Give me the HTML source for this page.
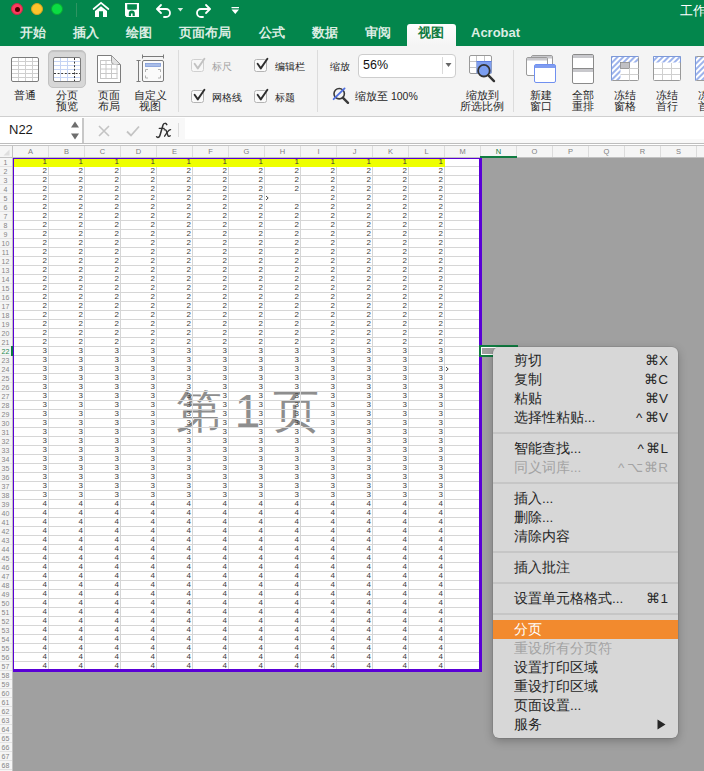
<!DOCTYPE html><html><head><meta charset="utf-8"><style>
*{margin:0;padding:0;box-sizing:border-box}
html,body{width:704px;height:771px;overflow:hidden;background:#fff;font-family:"Liberation Sans", sans-serif}
.a{position:absolute}
#top{left:0;top:0;width:704px;height:46px;background:#03864c}
.tab{position:absolute;top:26px;color:#dcede3;font-size:13px;font-weight:bold;line-height:14px;white-space:nowrap}
#rib{left:0;top:46px;width:704px;height:71px;background:#f4f4f4;border-bottom:1px solid #cfcfcf}
.rt{position:absolute;font-size:10.5px;line-height:10.5px;color:#262626;text-align:center;white-space:nowrap}
.sep{position:absolute;width:1px;background:#dcdcdc}
.cb{position:absolute;width:13px;height:13px;border:1px solid #b4b4b4;border-radius:2.5px;background:#fafafa}
.cl{position:absolute;font-size:10px;line-height:11px;color:#262626;white-space:nowrap}
.ch{position:absolute;top:146px;height:11px;font-size:7.5px;line-height:11px;color:#808080;text-align:center;width:35px}
.rh{position:absolute;left:0;width:11px;height:8px;font-size:7px;line-height:9px;color:#858585;text-align:center}
.r{position:absolute;font-size:8px;line-height:8px;color:#3a3a3a;text-align:right;width:34px;white-space:nowrap}
.mi{position:absolute;left:21px;font-size:13.5px;line-height:19px;height:19px;color:#262626;white-space:nowrap}
.ms{position:absolute;right:10px;font-size:13.5px;line-height:19px;height:19px;color:#262626;white-space:nowrap;text-align:right}
.mline{position:absolute;left:0;width:185px;height:2px;background:#c6c6c6}
</style></head><body>
<div id="top" class="a">
<div class="a" style="left:11px;top:3px;width:12px;height:12px;border-radius:50%;background:#fd3c5e;border:0.5px solid #c92a48"></div>
<div class="a" style="left:31px;top:3px;width:12px;height:12px;border-radius:50%;background:#fdc42c;border:0.5px solid #d9a21e"></div>
<div class="a" style="left:51px;top:3px;width:12px;height:12px;border-radius:50%;background:#0bdc43;border:0.5px solid #08a833"></div>
<div class="a" style="left:14.5px;top:6.5px;width:5px;height:5px;border-radius:50%;background:#4d0000"></div>
<div class="a" style="left:76px;top:3px;width:1px;height:14px;background:#2f9462"></div>
<svg class="a" style="left:0;top:0" width="260" height="22" viewBox="0 0 260 22">
<g fill="#fff">
<path d="M101 6.2 L107 11 V17 H103 V11.2 H99 V17 H95 V11 Z"/>
<path d="M93.6 9 L101 2.9 L108.4 9" fill="none" stroke="#fff" stroke-width="1.7" stroke-linecap="round" stroke-linejoin="miter"/>
<path d="M125 3 h14 v14 h-12.5 l-1.5 -1.5 z M127.2 4.2 h9.7 v4.3 a1.3 1.3 0 0 1 -1.3 1.3 h-7.1 a1.3 1.3 0 0 1 -1.3 -1.3 z M128.8 16 v-2.6 a3 3 0 0 1 6 0 v2.6 h-2.2 v-2.4 h-1.6 v2.4 z" fill-rule="evenodd"/>
<path d="M177.6 8 h5.6 l-2.8 3.6 z" fill="#d8eadf"/>
<path d="M231.5 7 h7.5 v1.2 h-7.5 z M231.5 9.5 h7.5 l-3.75 4.5 z"/>
</g>
<g fill="none" stroke="#fff" stroke-width="1.8" stroke-linecap="round" stroke-linejoin="round">
<path d="M161 5 L157 9 L161 13"/><path d="M157.5 9 H166 a4 4 0 0 1 0 8 h-2"/>
<path d="M206 5 L210 9 L206 13"/><path d="M209.5 9 H201 a4 4 0 0 0 0 8 h2"/>
</g></svg>
<div class="a" style="left:680px;top:4px;font-size:13px;line-height:14px;color:#fff;white-space:nowrap">工作簿1</div>
<div class="tab" style="left:20px">开始</div>
<div class="tab" style="left:73px">插入</div>
<div class="tab" style="left:126px">绘图</div>
<div class="tab" style="left:179px">页面布局</div>
<div class="tab" style="left:259px">公式</div>
<div class="tab" style="left:312px">数据</div>
<div class="tab" style="left:365px">审阅</div>
<div class="tab" style="left:471px">Acrobat</div>
<div class="a" style="left:407px;top:24px;width:49px;height:22px;background:linear-gradient(#fefefe,#f4f4f4);border-radius:3px 3px 0 0"></div>
<div class="tab" style="left:418px;color:#107c41">视图</div>
</div>
<div id="rib" class="a"></div>
<div id="ribc" class="a" style="left:0;top:0;width:704px;height:120px">
<div class="a" style="left:48px;top:50px;width:38px;height:38px;border-radius:5px;background:#d7d7d7;border:1px solid #c2c2c2;box-shadow:inset 0 1px 1px rgba(0,0,0,0.10)"></div>
<svg class="a" style="left:0;top:0" width="704" height="117" viewBox="0 0 704 117">
<defs><pattern id="hat" width="4" height="4" patternUnits="userSpaceOnUse" patternTransform="rotate(45)"><rect width="4" height="4" fill="#fff"/><rect width="2" height="4" fill="#9db3ec"/></pattern></defs>
<!-- 普通 -->
<rect x="11.5" y="57.5" width="27" height="24" rx="1.5" fill="#fff" stroke="#7c7c7c"/>
<path d="M18.5 58v23M25.5 58v23M32.5 58v23M12 61.5h26M12 65.5h26M12 69.5h26M12 73.5h26M12 77.5h26" stroke="#cfcfcf" stroke-width="1" fill="none"/>
<!-- 分页预览 -->
<rect x="53.5" y="57.5" width="27" height="24" rx="1.5" fill="#fff" stroke="#7c7c7c"/>
<path d="M60.5 58v23M67.5 58v23M54 61.5h26M54 65.5h26M54 69.5h26M54 77.5h26" stroke="#c6d4f4" stroke-width="1" fill="none"/>
<path d="M74.5 58v23M54 73.5h26" stroke="#3a3a3a" stroke-width="1" stroke-dasharray="2 1.6" fill="none"/>
<!-- 页面布局 -->
<path d="M97.5 55.5h14l9 9v18h-23z" fill="#fff" stroke="#7c7c7c"/>
<path d="M111.5 55.5v6a3 3 0 0 0 3 3h6z" fill="#e2e2e2" stroke="#9a9a9a"/>
<path d="M100.5 60.5h10M100.5 64.5h17M100.5 69h17M100.5 73.5h17M100.5 78.5h17M100.5 60v19M106 60v19M111.5 64v15M117 65v14" stroke="#c8c8c8" fill="none"/>
<!-- 自定义视图 -->
<path d="M142.5 54.5v4M163.5 54.5v4M142.5 56.5h21M136.5 60.5h4M136.5 81.5h4M138.5 60.5v21" stroke="#7a7a7a" fill="none"/>
<rect x="142.5" y="60.5" width="21" height="21" rx="1.5" fill="#fafafa" stroke="#7c7c7c"/>
<rect x="145.5" y="63.5" width="15" height="3" fill="#a9bde8" stroke="#7f9bd8" stroke-width="0.8"/>
<path d="M145.5 72v-2.5h2.5M158 69.5h2.5v2.5M145.5 75.5v2.5h2.5M158 78h2.5v-2.5" stroke="#b0b0b0" fill="none"/>
<!-- zoom 100 icon -->
<circle cx="339.2" cy="93.7" r="5.2" fill="none" stroke="#3a3a3a" stroke-width="1.6"/>
<path d="M343 97.8l5 5" stroke="#3a3a3a" stroke-width="2.4" stroke-linecap="round"/>
<path d="M333.6 99.2l11-10.8" stroke="#4f6fe0" stroke-width="1.8" stroke-linecap="round"/>
<!-- zoom to selection -->
<rect x="469.5" y="55.5" width="22" height="18" rx="1.5" fill="#fff" stroke="#9a9a9a"/>
<path d="M476.5 56v17M484.5 56v6M470 61.5h7M470 67.5h7" stroke="#c4c4c4" fill="none"/>
<rect x="476.5" y="61" width="15" height="12.5" fill="#7f9ff0"/>
<path d="M476.5 61.5h15" stroke="#5f7fe0"/>
<circle cx="483.9" cy="70.7" r="5.8" fill="#7b9ef0" stroke="#333" stroke-width="1.8"/>
<path d="M488.4 75.3l5.6 5.8" stroke="#333" stroke-width="2.4" stroke-linecap="round"/>
<!-- new window -->
<rect x="531.5" y="55.5" width="21" height="17" rx="1.5" fill="#fff" stroke="#9a9a9a"/>
<rect x="532" y="56" width="20" height="2.5" fill="#c8c8cc"/>
<rect x="526.5" y="57.5" width="21" height="18" rx="1.5" fill="#fff" stroke="#9a9a9a"/>
<rect x="527" y="58" width="20" height="2.5" fill="#c8c8cc"/>
<rect x="534.5" y="64.5" width="21" height="18" rx="1.5" fill="#fff" stroke="#7090f0"/>
<rect x="535" y="65" width="20" height="3" fill="#7f9cf0"/>
<!-- arrange all -->
<rect x="572.5" y="54.5" width="21" height="29" rx="1.5" fill="#fff" stroke="#8a8a8a"/>
<rect x="573" y="55" width="20" height="3" fill="#c8c8cc"/>
<path d="M572.5 68.5h21" stroke="#8a8a8a"/>
<rect x="573" y="69" width="20" height="3" fill="#c8c8cc"/>
<!-- freeze panes -->
<rect x="611.5" y="56.5" width="27" height="24" rx="1" fill="#fff" stroke="#9a9a9a"/>
<rect x="612" y="57" width="26" height="5.5" fill="url(#hat)"/>
<rect x="612" y="57" width="8.5" height="23" fill="url(#hat)"/>
<path d="M611.5 80.5v-24h27" stroke="#7d99d8" fill="none"/>
<rect x="620.5" y="62.5" width="9" height="6" fill="#c0c0c4" stroke="#8a8a8a" stroke-width="0.8"/>
<path d="M620.5 74.5h18M629.5 68.5v12M629.5 68.5h9" stroke="#cfcfcf" fill="none"/>
<!-- freeze top row -->
<rect x="653.5" y="56.5" width="27" height="24" rx="1" fill="#fff" stroke="#9a9a9a"/>
<rect x="654" y="57" width="26" height="5.5" fill="url(#hat)"/>
<path d="M653.5 62.5v-6h27v6" stroke="#7d99d8" fill="none"/>
<path d="M654 68.5h26M654 74.5h26M662.5 63v17M671.5 63v17" stroke="#cfcfcf" fill="none"/>
<!-- freeze first col partial -->
<rect x="695.5" y="56.5" width="27" height="24" rx="1" fill="#fff" stroke="#9a9a9a"/>
<rect x="696" y="57" width="8.5" height="23" fill="url(#hat)"/>
<path d="M695.5 80.5v-24" stroke="#7d99d8" fill="none"/>
</svg>
<div class="rt" style="left:5.0px;top:90px;width:40px">普通</div>
<div class="rt" style="left:46.5px;top:90px;width:40px">分页<br>预览</div>
<div class="rt" style="left:88.5px;top:90px;width:40px">页面<br>布局</div>
<div class="rt" style="left:130.0px;top:90px;width:40px">自定义<br>视图</div>
<div class="rt" style="left:457.0px;top:90px;width:50px">缩放到<br>所选比例</div>
<div class="rt" style="left:520.5px;top:90px;width:40px">新建<br>窗口</div>
<div class="rt" style="left:563.0px;top:90px;width:40px">全部<br>重排</div>
<div class="rt" style="left:605.0px;top:90px;width:40px">冻结<br>窗格</div>
<div class="rt" style="left:647.0px;top:90px;width:40px">冻结<br>首行</div>
<div class="rt" style="left:689.0px;top:90px;width:40px">冻结<br>首列</div>
<div class="sep" style="left:178px;top:50px;height:62px"></div>
<div class="sep" style="left:317px;top:50px;height:62px"></div>
<div class="sep" style="left:513px;top:50px;height:62px"></div>
<div class="cb" style="left:191px;top:59px;opacity:.55;"></div>
<svg class="a" style="left:191px;top:57px" width="16" height="16"><path d="M3.6 6.8l3.2 4.6L13.4 1.8" fill="none" stroke="#c2c2c2" stroke-width="1.9" stroke-linecap="round" stroke-linejoin="round"/></svg>
<div class="cl" style="left:212px;top:60.5px;color:#a0a0a0">标尺</div>
<div class="cb" style="left:254px;top:59px;"></div>
<svg class="a" style="left:254px;top:57px" width="16" height="16"><path d="M3.6 6.8l3.2 4.6L13.4 1.8" fill="none" stroke="#2e2e2e" stroke-width="1.9" stroke-linecap="round" stroke-linejoin="round"/></svg>
<div class="cl" style="left:275px;top:60.5px;color:#262626">编辑栏</div>
<div class="cb" style="left:191px;top:90px;"></div>
<svg class="a" style="left:191px;top:88px" width="16" height="16"><path d="M3.6 6.8l3.2 4.6L13.4 1.8" fill="none" stroke="#2e2e2e" stroke-width="1.9" stroke-linecap="round" stroke-linejoin="round"/></svg>
<div class="cl" style="left:212px;top:91.5px;color:#262626">网格线</div>
<div class="cb" style="left:254px;top:90px;"></div>
<svg class="a" style="left:254px;top:88px" width="16" height="16"><path d="M3.6 6.8l3.2 4.6L13.4 1.8" fill="none" stroke="#2e2e2e" stroke-width="1.9" stroke-linecap="round" stroke-linejoin="round"/></svg>
<div class="cl" style="left:275px;top:91.5px;color:#262626">标题</div>
<div class="cl" style="left:330px;top:61px">缩放</div>
<div class="a" style="left:358px;top:54px;width:98px;height:24px;background:#fff;border:1px solid #cdcdcd;border-radius:4px"></div>
<div class="a" style="left:442px;top:57px;width:1px;height:17px;background:#dadada"></div>
<svg class="a" style="left:445px;top:62px" width="8" height="6"><path d="M0.5 1h6l-3 4z" fill="#666"/></svg>
<div class="a" style="left:363px;top:58px;font-size:12.5px;line-height:14px;color:#111">56%</div>
<div class="cl" style="left:355px;top:91px;font-size:10.5px">缩放至 100%</div>
</div>
<div class="a" style="left:0;top:118px;width:704px;height:25px;background:#f8f8f8"></div>
<div class="a" style="left:0;top:118px;width:82px;height:25px;background:#fff"></div>
<div class="a" style="left:185px;top:118px;width:519px;height:21px;background:#fff"></div>
<div class="a" style="left:82px;top:118px;width:2px;height:25px;background:#c8c8c8"></div>
<div class="a" style="left:9px;top:123px;font-size:13px;line-height:14px;color:#1a1a1a">N22</div>
<svg class="a" style="left:70px;top:120px" width="10" height="21"><path d="M1 7.5h8l-4-6z M1 13.5h8l-4 6z" fill="#6e6e6e"/></svg>
<svg class="a" style="left:90px;top:118px" width="100" height="25"><path d="M9 8l10 10M19 8l-10 10" stroke="#c4c4c4" stroke-width="1.6"/><path d="M37 13.5l4 4l8-9" fill="none" stroke="#c4c4c4" stroke-width="1.8"/><path d="M88.5 5v14" stroke="#dcdcdc"/></svg>
<svg class="a" style="left:150px;top:118px" width="30" height="24" viewBox="150 118 30 24"><g fill="none" stroke="#333" stroke-linecap="round"><path d="M166.8 124.6 C166 122.9 163.8 122.9 163 125 L160 135.3 C159.4 137.6 157.6 137.8 156.6 136.8" stroke-width="1.5"/><path d="M159.2 128.4 h5" stroke-width="1.1"/><path d="M164.2 129.8 C165.6 129.2 166.2 130.2 166.6 131.6 L167.8 135.2 C168.3 136.8 169.4 136.6 170.2 135.8" stroke-width="1.4"/><path d="M170.6 129.6 C169.6 129.6 168.2 130.8 166.8 132.8 L164.6 136.2" stroke-width="1.3"/></g></svg>
<div class="a" style="left:0;top:143px;width:704px;height:1px;background:#bdbdbd"></div>
<div class="a" style="left:0;top:145px;width:704px;height:1px;background:#c4c4c4"></div>
<div class="a" style="left:0;top:146px;width:704px;height:11px;background:#f5f5f5"></div>
<div class="a" style="left:0;top:157px;width:704px;height:1px;background:#c2c2c2"></div>
<div class="a" style="left:0;top:158px;width:12px;height:613px;background:#f5f5f5"></div>
<div class="a" style="left:12px;top:146px;width:1px;height:625px;background:#c2c2c2"></div>
<svg class="a" style="left:0;top:146px" width="12" height="11"><path d="M9.5 3.5v6h-6z" fill="#dedede"/></svg>
<div class="ch" style="left:13px;color:#808080">A</div>
<div class="a" style="left:48px;top:146px;width:1px;height:11px;background:#dcdcdc"></div>
<div class="ch" style="left:49px;color:#808080">B</div>
<div class="a" style="left:84px;top:146px;width:1px;height:11px;background:#dcdcdc"></div>
<div class="ch" style="left:85px;color:#808080">C</div>
<div class="a" style="left:120px;top:146px;width:1px;height:11px;background:#dcdcdc"></div>
<div class="ch" style="left:121px;color:#808080">D</div>
<div class="a" style="left:156px;top:146px;width:1px;height:11px;background:#dcdcdc"></div>
<div class="ch" style="left:157px;color:#808080">E</div>
<div class="a" style="left:192px;top:146px;width:1px;height:11px;background:#dcdcdc"></div>
<div class="ch" style="left:193px;color:#808080">F</div>
<div class="a" style="left:228px;top:146px;width:1px;height:11px;background:#dcdcdc"></div>
<div class="ch" style="left:229px;color:#808080">G</div>
<div class="a" style="left:264px;top:146px;width:1px;height:11px;background:#dcdcdc"></div>
<div class="ch" style="left:265px;color:#808080">H</div>
<div class="a" style="left:300px;top:146px;width:1px;height:11px;background:#dcdcdc"></div>
<div class="ch" style="left:301px;color:#808080">I</div>
<div class="a" style="left:336px;top:146px;width:1px;height:11px;background:#dcdcdc"></div>
<div class="ch" style="left:337px;color:#808080">J</div>
<div class="a" style="left:372px;top:146px;width:1px;height:11px;background:#dcdcdc"></div>
<div class="ch" style="left:373px;color:#808080">K</div>
<div class="a" style="left:408px;top:146px;width:1px;height:11px;background:#dcdcdc"></div>
<div class="ch" style="left:409px;color:#808080">L</div>
<div class="a" style="left:444px;top:146px;width:1px;height:11px;background:#dcdcdc"></div>
<div class="ch" style="left:445px;color:#808080">M</div>
<div class="a" style="left:480px;top:146px;width:1px;height:11px;background:#dcdcdc"></div>
<div class="ch" style="left:481px;color:#107c41">N</div>
<div class="a" style="left:516px;top:146px;width:1px;height:11px;background:#dcdcdc"></div>
<div class="ch" style="left:517px;color:#808080">O</div>
<div class="a" style="left:552px;top:146px;width:1px;height:11px;background:#dcdcdc"></div>
<div class="ch" style="left:553px;color:#808080">P</div>
<div class="a" style="left:588px;top:146px;width:1px;height:11px;background:#dcdcdc"></div>
<div class="ch" style="left:589px;color:#808080">Q</div>
<div class="a" style="left:624px;top:146px;width:1px;height:11px;background:#dcdcdc"></div>
<div class="ch" style="left:625px;color:#808080">R</div>
<div class="a" style="left:660px;top:146px;width:1px;height:11px;background:#dcdcdc"></div>
<div class="ch" style="left:661px;color:#808080">S</div>
<div class="a" style="left:696px;top:146px;width:1px;height:11px;background:#dcdcdc"></div>
<div class="a" style="left:480px;top:156px;width:37px;height:2px;background:#107c41"></div>
<div class="rh" style="top:158px;color:#858585">1</div>
<div class="a" style="left:0;top:166px;width:12px;height:1px;background:#e2e2e2"></div>
<div class="rh" style="top:167px;color:#858585">2</div>
<div class="a" style="left:0;top:175px;width:12px;height:1px;background:#e2e2e2"></div>
<div class="rh" style="top:176px;color:#858585">3</div>
<div class="a" style="left:0;top:184px;width:12px;height:1px;background:#e2e2e2"></div>
<div class="rh" style="top:185px;color:#858585">4</div>
<div class="a" style="left:0;top:193px;width:12px;height:1px;background:#e2e2e2"></div>
<div class="rh" style="top:194px;color:#858585">5</div>
<div class="a" style="left:0;top:202px;width:12px;height:1px;background:#e2e2e2"></div>
<div class="rh" style="top:203px;color:#858585">6</div>
<div class="a" style="left:0;top:211px;width:12px;height:1px;background:#e2e2e2"></div>
<div class="rh" style="top:212px;color:#858585">7</div>
<div class="a" style="left:0;top:220px;width:12px;height:1px;background:#e2e2e2"></div>
<div class="rh" style="top:221px;color:#858585">8</div>
<div class="a" style="left:0;top:229px;width:12px;height:1px;background:#e2e2e2"></div>
<div class="rh" style="top:230px;color:#858585">9</div>
<div class="a" style="left:0;top:238px;width:12px;height:1px;background:#e2e2e2"></div>
<div class="rh" style="top:239px;color:#858585">10</div>
<div class="a" style="left:0;top:247px;width:12px;height:1px;background:#e2e2e2"></div>
<div class="rh" style="top:248px;color:#858585">11</div>
<div class="a" style="left:0;top:256px;width:12px;height:1px;background:#e2e2e2"></div>
<div class="rh" style="top:257px;color:#858585">12</div>
<div class="a" style="left:0;top:265px;width:12px;height:1px;background:#e2e2e2"></div>
<div class="rh" style="top:266px;color:#858585">13</div>
<div class="a" style="left:0;top:274px;width:12px;height:1px;background:#e2e2e2"></div>
<div class="rh" style="top:275px;color:#858585">14</div>
<div class="a" style="left:0;top:283px;width:12px;height:1px;background:#e2e2e2"></div>
<div class="rh" style="top:284px;color:#858585">15</div>
<div class="a" style="left:0;top:292px;width:12px;height:1px;background:#e2e2e2"></div>
<div class="rh" style="top:293px;color:#858585">16</div>
<div class="a" style="left:0;top:301px;width:12px;height:1px;background:#e2e2e2"></div>
<div class="rh" style="top:302px;color:#858585">17</div>
<div class="a" style="left:0;top:310px;width:12px;height:1px;background:#e2e2e2"></div>
<div class="rh" style="top:311px;color:#858585">18</div>
<div class="a" style="left:0;top:319px;width:12px;height:1px;background:#e2e2e2"></div>
<div class="rh" style="top:320px;color:#858585">19</div>
<div class="a" style="left:0;top:328px;width:12px;height:1px;background:#e2e2e2"></div>
<div class="rh" style="top:329px;color:#858585">20</div>
<div class="a" style="left:0;top:337px;width:12px;height:1px;background:#e2e2e2"></div>
<div class="rh" style="top:338px;color:#858585">21</div>
<div class="a" style="left:0;top:346px;width:12px;height:1px;background:#e2e2e2"></div>
<div class="rh" style="top:347px;color:#1f8a50">22</div>
<div class="a" style="left:0;top:355px;width:12px;height:1px;background:#e2e2e2"></div>
<div class="rh" style="top:356px;color:#858585">23</div>
<div class="a" style="left:0;top:364px;width:12px;height:1px;background:#e2e2e2"></div>
<div class="rh" style="top:365px;color:#858585">24</div>
<div class="a" style="left:0;top:373px;width:12px;height:1px;background:#e2e2e2"></div>
<div class="rh" style="top:374px;color:#858585">25</div>
<div class="a" style="left:0;top:382px;width:12px;height:1px;background:#e2e2e2"></div>
<div class="rh" style="top:383px;color:#858585">26</div>
<div class="a" style="left:0;top:391px;width:12px;height:1px;background:#e2e2e2"></div>
<div class="rh" style="top:392px;color:#858585">27</div>
<div class="a" style="left:0;top:400px;width:12px;height:1px;background:#e2e2e2"></div>
<div class="rh" style="top:401px;color:#858585">28</div>
<div class="a" style="left:0;top:409px;width:12px;height:1px;background:#e2e2e2"></div>
<div class="rh" style="top:410px;color:#858585">29</div>
<div class="a" style="left:0;top:418px;width:12px;height:1px;background:#e2e2e2"></div>
<div class="rh" style="top:419px;color:#858585">30</div>
<div class="a" style="left:0;top:427px;width:12px;height:1px;background:#e2e2e2"></div>
<div class="rh" style="top:428px;color:#858585">31</div>
<div class="a" style="left:0;top:436px;width:12px;height:1px;background:#e2e2e2"></div>
<div class="rh" style="top:437px;color:#858585">32</div>
<div class="a" style="left:0;top:445px;width:12px;height:1px;background:#e2e2e2"></div>
<div class="rh" style="top:446px;color:#858585">33</div>
<div class="a" style="left:0;top:454px;width:12px;height:1px;background:#e2e2e2"></div>
<div class="rh" style="top:455px;color:#858585">34</div>
<div class="a" style="left:0;top:463px;width:12px;height:1px;background:#e2e2e2"></div>
<div class="rh" style="top:464px;color:#858585">35</div>
<div class="a" style="left:0;top:472px;width:12px;height:1px;background:#e2e2e2"></div>
<div class="rh" style="top:473px;color:#858585">36</div>
<div class="a" style="left:0;top:481px;width:12px;height:1px;background:#e2e2e2"></div>
<div class="rh" style="top:482px;color:#858585">37</div>
<div class="a" style="left:0;top:490px;width:12px;height:1px;background:#e2e2e2"></div>
<div class="rh" style="top:491px;color:#858585">38</div>
<div class="a" style="left:0;top:499px;width:12px;height:1px;background:#e2e2e2"></div>
<div class="rh" style="top:500px;color:#858585">39</div>
<div class="a" style="left:0;top:508px;width:12px;height:1px;background:#e2e2e2"></div>
<div class="rh" style="top:509px;color:#858585">40</div>
<div class="a" style="left:0;top:517px;width:12px;height:1px;background:#e2e2e2"></div>
<div class="rh" style="top:518px;color:#858585">41</div>
<div class="a" style="left:0;top:526px;width:12px;height:1px;background:#e2e2e2"></div>
<div class="rh" style="top:527px;color:#858585">42</div>
<div class="a" style="left:0;top:535px;width:12px;height:1px;background:#e2e2e2"></div>
<div class="rh" style="top:536px;color:#858585">43</div>
<div class="a" style="left:0;top:544px;width:12px;height:1px;background:#e2e2e2"></div>
<div class="rh" style="top:545px;color:#858585">44</div>
<div class="a" style="left:0;top:553px;width:12px;height:1px;background:#e2e2e2"></div>
<div class="rh" style="top:554px;color:#858585">45</div>
<div class="a" style="left:0;top:562px;width:12px;height:1px;background:#e2e2e2"></div>
<div class="rh" style="top:563px;color:#858585">46</div>
<div class="a" style="left:0;top:571px;width:12px;height:1px;background:#e2e2e2"></div>
<div class="rh" style="top:572px;color:#858585">47</div>
<div class="a" style="left:0;top:580px;width:12px;height:1px;background:#e2e2e2"></div>
<div class="rh" style="top:581px;color:#858585">48</div>
<div class="a" style="left:0;top:589px;width:12px;height:1px;background:#e2e2e2"></div>
<div class="rh" style="top:590px;color:#858585">49</div>
<div class="a" style="left:0;top:598px;width:12px;height:1px;background:#e2e2e2"></div>
<div class="rh" style="top:599px;color:#858585">50</div>
<div class="a" style="left:0;top:607px;width:12px;height:1px;background:#e2e2e2"></div>
<div class="rh" style="top:608px;color:#858585">51</div>
<div class="a" style="left:0;top:616px;width:12px;height:1px;background:#e2e2e2"></div>
<div class="rh" style="top:617px;color:#858585">52</div>
<div class="a" style="left:0;top:625px;width:12px;height:1px;background:#e2e2e2"></div>
<div class="rh" style="top:626px;color:#858585">53</div>
<div class="a" style="left:0;top:634px;width:12px;height:1px;background:#e2e2e2"></div>
<div class="rh" style="top:635px;color:#858585">54</div>
<div class="a" style="left:0;top:643px;width:12px;height:1px;background:#e2e2e2"></div>
<div class="rh" style="top:644px;color:#858585">55</div>
<div class="a" style="left:0;top:652px;width:12px;height:1px;background:#e2e2e2"></div>
<div class="rh" style="top:653px;color:#858585">56</div>
<div class="a" style="left:0;top:661px;width:12px;height:1px;background:#e2e2e2"></div>
<div class="rh" style="top:662px;color:#858585">57</div>
<div class="a" style="left:0;top:670px;width:12px;height:1px;background:#e2e2e2"></div>
<div class="rh" style="top:671px;color:#858585">58</div>
<div class="a" style="left:0;top:679px;width:12px;height:1px;background:#e2e2e2"></div>
<div class="rh" style="top:680px;color:#858585">59</div>
<div class="a" style="left:0;top:688px;width:12px;height:1px;background:#e2e2e2"></div>
<div class="rh" style="top:689px;color:#858585">60</div>
<div class="a" style="left:0;top:697px;width:12px;height:1px;background:#e2e2e2"></div>
<div class="rh" style="top:698px;color:#858585">61</div>
<div class="a" style="left:0;top:706px;width:12px;height:1px;background:#e2e2e2"></div>
<div class="rh" style="top:707px;color:#858585">62</div>
<div class="a" style="left:0;top:715px;width:12px;height:1px;background:#e2e2e2"></div>
<div class="rh" style="top:716px;color:#858585">63</div>
<div class="a" style="left:0;top:724px;width:12px;height:1px;background:#e2e2e2"></div>
<div class="rh" style="top:725px;color:#858585">64</div>
<div class="a" style="left:0;top:733px;width:12px;height:1px;background:#e2e2e2"></div>
<div class="rh" style="top:734px;color:#858585">65</div>
<div class="a" style="left:0;top:742px;width:12px;height:1px;background:#e2e2e2"></div>
<div class="rh" style="top:743px;color:#858585">66</div>
<div class="a" style="left:0;top:751px;width:12px;height:1px;background:#e2e2e2"></div>
<div class="rh" style="top:752px;color:#858585">67</div>
<div class="a" style="left:0;top:760px;width:12px;height:1px;background:#e2e2e2"></div>
<div class="rh" style="top:761px;color:#858585">68</div>
<div class="a" style="left:0;top:769px;width:12px;height:1px;background:#e2e2e2"></div>
<div class="rh" style="top:770px;color:#858585">69</div>
<div class="a" style="left:0;top:778px;width:12px;height:1px;background:#e2e2e2"></div>
<div class="a" style="left:11px;top:346px;width:2px;height:10px;background:#107c41"></div>
<div class="a" style="left:13px;top:158px;width:691px;height:613px;background:#a0a0a0"></div>
<div class="a" style="left:13px;top:158px;width:468px;height:513px;background:#fff"></div>
<div class="a" style="left:176px;top:383px;font-size:46px;line-height:56px;color:#8e8e8e;white-space:nowrap">第 1 页</div>
<div class="a" style="left:13px;top:158px;width:468px;height:513px;background-image:linear-gradient(to right,transparent 35px,#d6d6d6 35px),linear-gradient(to bottom,transparent 8px,#d6d6d6 8px);background-size:36px 9px,36px 9px"></div>
<div class="a" style="left:13px;top:158px;width:432px;height:9px;background:#eeff00"></div>
<div class="r" style="left:13px;top:158px">1</div><div class="r" style="left:49px;top:158px">1</div><div class="r" style="left:85px;top:158px">1</div><div class="r" style="left:121px;top:158px">1</div><div class="r" style="left:157px;top:158px">1</div><div class="r" style="left:193px;top:158px">1</div><div class="r" style="left:229px;top:158px">1</div><div class="r" style="left:265px;top:158px">1</div><div class="r" style="left:301px;top:158px">1</div><div class="r" style="left:337px;top:158px">1</div><div class="r" style="left:373px;top:158px">1</div><div class="r" style="left:409px;top:158px">1</div>
<div class="r" style="left:13px;top:167px">2</div><div class="r" style="left:49px;top:167px">2</div><div class="r" style="left:85px;top:167px">2</div><div class="r" style="left:121px;top:167px">2</div><div class="r" style="left:157px;top:167px">2</div><div class="r" style="left:193px;top:167px">2</div><div class="r" style="left:229px;top:167px">2</div><div class="r" style="left:265px;top:167px">2</div><div class="r" style="left:301px;top:167px">2</div><div class="r" style="left:337px;top:167px">2</div><div class="r" style="left:373px;top:167px">2</div><div class="r" style="left:409px;top:167px">2</div>
<div class="r" style="left:13px;top:176px">2</div><div class="r" style="left:49px;top:176px">2</div><div class="r" style="left:85px;top:176px">2</div><div class="r" style="left:121px;top:176px">2</div><div class="r" style="left:157px;top:176px">2</div><div class="r" style="left:193px;top:176px">2</div><div class="r" style="left:229px;top:176px">2</div><div class="r" style="left:265px;top:176px">2</div><div class="r" style="left:301px;top:176px">2</div><div class="r" style="left:337px;top:176px">2</div><div class="r" style="left:373px;top:176px">2</div><div class="r" style="left:409px;top:176px">2</div>
<div class="r" style="left:13px;top:185px">2</div><div class="r" style="left:49px;top:185px">2</div><div class="r" style="left:85px;top:185px">2</div><div class="r" style="left:121px;top:185px">2</div><div class="r" style="left:157px;top:185px">2</div><div class="r" style="left:193px;top:185px">2</div><div class="r" style="left:229px;top:185px">2</div><div class="r" style="left:265px;top:185px">2</div><div class="r" style="left:301px;top:185px">2</div><div class="r" style="left:337px;top:185px">2</div><div class="r" style="left:373px;top:185px">2</div><div class="r" style="left:409px;top:185px">2</div>
<div class="r" style="left:13px;top:194px">2</div><div class="r" style="left:49px;top:194px">2</div><div class="r" style="left:85px;top:194px">2</div><div class="r" style="left:121px;top:194px">2</div><div class="r" style="left:157px;top:194px">2</div><div class="r" style="left:193px;top:194px">2</div><div class="r" style="left:229px;top:194px">2</div><div class="r" style="left:301px;top:194px">2</div><div class="r" style="left:337px;top:194px">2</div><div class="r" style="left:373px;top:194px">2</div><div class="r" style="left:409px;top:194px">2</div>
<div class="r" style="left:13px;top:203px">2</div><div class="r" style="left:49px;top:203px">2</div><div class="r" style="left:85px;top:203px">2</div><div class="r" style="left:121px;top:203px">2</div><div class="r" style="left:157px;top:203px">2</div><div class="r" style="left:193px;top:203px">2</div><div class="r" style="left:229px;top:203px">2</div><div class="r" style="left:265px;top:203px">2</div><div class="r" style="left:301px;top:203px">2</div><div class="r" style="left:337px;top:203px">2</div><div class="r" style="left:373px;top:203px">2</div><div class="r" style="left:409px;top:203px">2</div>
<div class="r" style="left:13px;top:212px">2</div><div class="r" style="left:49px;top:212px">2</div><div class="r" style="left:85px;top:212px">2</div><div class="r" style="left:121px;top:212px">2</div><div class="r" style="left:157px;top:212px">2</div><div class="r" style="left:193px;top:212px">2</div><div class="r" style="left:229px;top:212px">2</div><div class="r" style="left:265px;top:212px">2</div><div class="r" style="left:301px;top:212px">2</div><div class="r" style="left:337px;top:212px">2</div><div class="r" style="left:373px;top:212px">2</div><div class="r" style="left:409px;top:212px">2</div>
<div class="r" style="left:13px;top:221px">2</div><div class="r" style="left:49px;top:221px">2</div><div class="r" style="left:85px;top:221px">2</div><div class="r" style="left:121px;top:221px">2</div><div class="r" style="left:157px;top:221px">2</div><div class="r" style="left:193px;top:221px">2</div><div class="r" style="left:229px;top:221px">2</div><div class="r" style="left:265px;top:221px">2</div><div class="r" style="left:301px;top:221px">2</div><div class="r" style="left:337px;top:221px">2</div><div class="r" style="left:373px;top:221px">2</div><div class="r" style="left:409px;top:221px">2</div>
<div class="r" style="left:13px;top:230px">2</div><div class="r" style="left:49px;top:230px">2</div><div class="r" style="left:85px;top:230px">2</div><div class="r" style="left:121px;top:230px">2</div><div class="r" style="left:157px;top:230px">2</div><div class="r" style="left:193px;top:230px">2</div><div class="r" style="left:229px;top:230px">2</div><div class="r" style="left:265px;top:230px">2</div><div class="r" style="left:301px;top:230px">2</div><div class="r" style="left:337px;top:230px">2</div><div class="r" style="left:373px;top:230px">2</div><div class="r" style="left:409px;top:230px">2</div>
<div class="r" style="left:13px;top:239px">2</div><div class="r" style="left:49px;top:239px">2</div><div class="r" style="left:85px;top:239px">2</div><div class="r" style="left:121px;top:239px">2</div><div class="r" style="left:157px;top:239px">2</div><div class="r" style="left:193px;top:239px">2</div><div class="r" style="left:229px;top:239px">2</div><div class="r" style="left:265px;top:239px">2</div><div class="r" style="left:301px;top:239px">2</div><div class="r" style="left:337px;top:239px">2</div><div class="r" style="left:373px;top:239px">2</div><div class="r" style="left:409px;top:239px">2</div>
<div class="r" style="left:13px;top:248px">2</div><div class="r" style="left:49px;top:248px">2</div><div class="r" style="left:85px;top:248px">2</div><div class="r" style="left:121px;top:248px">2</div><div class="r" style="left:157px;top:248px">2</div><div class="r" style="left:193px;top:248px">2</div><div class="r" style="left:229px;top:248px">2</div><div class="r" style="left:265px;top:248px">2</div><div class="r" style="left:301px;top:248px">2</div><div class="r" style="left:337px;top:248px">2</div><div class="r" style="left:373px;top:248px">2</div><div class="r" style="left:409px;top:248px">2</div>
<div class="r" style="left:13px;top:257px">2</div><div class="r" style="left:49px;top:257px">2</div><div class="r" style="left:85px;top:257px">2</div><div class="r" style="left:121px;top:257px">2</div><div class="r" style="left:157px;top:257px">2</div><div class="r" style="left:193px;top:257px">2</div><div class="r" style="left:229px;top:257px">2</div><div class="r" style="left:265px;top:257px">2</div><div class="r" style="left:301px;top:257px">2</div><div class="r" style="left:337px;top:257px">2</div><div class="r" style="left:373px;top:257px">2</div><div class="r" style="left:409px;top:257px">2</div>
<div class="r" style="left:13px;top:266px">2</div><div class="r" style="left:49px;top:266px">2</div><div class="r" style="left:85px;top:266px">2</div><div class="r" style="left:121px;top:266px">2</div><div class="r" style="left:157px;top:266px">2</div><div class="r" style="left:193px;top:266px">2</div><div class="r" style="left:229px;top:266px">2</div><div class="r" style="left:265px;top:266px">2</div><div class="r" style="left:301px;top:266px">2</div><div class="r" style="left:337px;top:266px">2</div><div class="r" style="left:373px;top:266px">2</div><div class="r" style="left:409px;top:266px">2</div>
<div class="r" style="left:13px;top:275px">2</div><div class="r" style="left:49px;top:275px">2</div><div class="r" style="left:85px;top:275px">2</div><div class="r" style="left:121px;top:275px">2</div><div class="r" style="left:157px;top:275px">2</div><div class="r" style="left:193px;top:275px">2</div><div class="r" style="left:229px;top:275px">2</div><div class="r" style="left:265px;top:275px">2</div><div class="r" style="left:301px;top:275px">2</div><div class="r" style="left:337px;top:275px">2</div><div class="r" style="left:373px;top:275px">2</div><div class="r" style="left:409px;top:275px">2</div>
<div class="r" style="left:13px;top:284px">2</div><div class="r" style="left:49px;top:284px">2</div><div class="r" style="left:85px;top:284px">2</div><div class="r" style="left:121px;top:284px">2</div><div class="r" style="left:157px;top:284px">2</div><div class="r" style="left:193px;top:284px">2</div><div class="r" style="left:229px;top:284px">2</div><div class="r" style="left:265px;top:284px">2</div><div class="r" style="left:301px;top:284px">2</div><div class="r" style="left:337px;top:284px">2</div><div class="r" style="left:373px;top:284px">2</div><div class="r" style="left:409px;top:284px">2</div>
<div class="r" style="left:13px;top:293px">2</div><div class="r" style="left:49px;top:293px">2</div><div class="r" style="left:85px;top:293px">2</div><div class="r" style="left:121px;top:293px">2</div><div class="r" style="left:157px;top:293px">2</div><div class="r" style="left:193px;top:293px">2</div><div class="r" style="left:229px;top:293px">2</div><div class="r" style="left:265px;top:293px">2</div><div class="r" style="left:301px;top:293px">2</div><div class="r" style="left:337px;top:293px">2</div><div class="r" style="left:373px;top:293px">2</div><div class="r" style="left:409px;top:293px">2</div>
<div class="r" style="left:13px;top:302px">2</div><div class="r" style="left:49px;top:302px">2</div><div class="r" style="left:85px;top:302px">2</div><div class="r" style="left:121px;top:302px">2</div><div class="r" style="left:157px;top:302px">2</div><div class="r" style="left:193px;top:302px">2</div><div class="r" style="left:229px;top:302px">2</div><div class="r" style="left:265px;top:302px">2</div><div class="r" style="left:301px;top:302px">2</div><div class="r" style="left:337px;top:302px">2</div><div class="r" style="left:373px;top:302px">2</div><div class="r" style="left:409px;top:302px">2</div>
<div class="r" style="left:13px;top:311px">2</div><div class="r" style="left:49px;top:311px">2</div><div class="r" style="left:85px;top:311px">2</div><div class="r" style="left:121px;top:311px">2</div><div class="r" style="left:157px;top:311px">2</div><div class="r" style="left:193px;top:311px">2</div><div class="r" style="left:229px;top:311px">2</div><div class="r" style="left:265px;top:311px">2</div><div class="r" style="left:301px;top:311px">2</div><div class="r" style="left:337px;top:311px">2</div><div class="r" style="left:373px;top:311px">2</div><div class="r" style="left:409px;top:311px">2</div>
<div class="r" style="left:13px;top:320px">2</div><div class="r" style="left:49px;top:320px">2</div><div class="r" style="left:85px;top:320px">2</div><div class="r" style="left:121px;top:320px">2</div><div class="r" style="left:157px;top:320px">2</div><div class="r" style="left:193px;top:320px">2</div><div class="r" style="left:229px;top:320px">2</div><div class="r" style="left:265px;top:320px">2</div><div class="r" style="left:301px;top:320px">2</div><div class="r" style="left:337px;top:320px">2</div><div class="r" style="left:373px;top:320px">2</div><div class="r" style="left:409px;top:320px">2</div>
<div class="r" style="left:13px;top:329px">2</div><div class="r" style="left:49px;top:329px">2</div><div class="r" style="left:85px;top:329px">2</div><div class="r" style="left:121px;top:329px">2</div><div class="r" style="left:157px;top:329px">2</div><div class="r" style="left:193px;top:329px">2</div><div class="r" style="left:229px;top:329px">2</div><div class="r" style="left:265px;top:329px">2</div><div class="r" style="left:301px;top:329px">2</div><div class="r" style="left:337px;top:329px">2</div><div class="r" style="left:373px;top:329px">2</div><div class="r" style="left:409px;top:329px">2</div>
<div class="r" style="left:13px;top:338px">2</div><div class="r" style="left:49px;top:338px">2</div><div class="r" style="left:85px;top:338px">2</div><div class="r" style="left:121px;top:338px">2</div><div class="r" style="left:157px;top:338px">2</div><div class="r" style="left:193px;top:338px">2</div><div class="r" style="left:229px;top:338px">2</div><div class="r" style="left:265px;top:338px">2</div><div class="r" style="left:301px;top:338px">2</div><div class="r" style="left:337px;top:338px">2</div><div class="r" style="left:373px;top:338px">2</div><div class="r" style="left:409px;top:338px">2</div>
<div class="r" style="left:13px;top:347px">3</div><div class="r" style="left:49px;top:347px">3</div><div class="r" style="left:85px;top:347px">3</div><div class="r" style="left:121px;top:347px">3</div><div class="r" style="left:157px;top:347px">3</div><div class="r" style="left:193px;top:347px">3</div><div class="r" style="left:229px;top:347px">3</div><div class="r" style="left:265px;top:347px">3</div><div class="r" style="left:301px;top:347px">3</div><div class="r" style="left:337px;top:347px">3</div><div class="r" style="left:373px;top:347px">3</div><div class="r" style="left:409px;top:347px">3</div>
<div class="r" style="left:13px;top:356px">3</div><div class="r" style="left:49px;top:356px">3</div><div class="r" style="left:85px;top:356px">3</div><div class="r" style="left:121px;top:356px">3</div><div class="r" style="left:157px;top:356px">3</div><div class="r" style="left:193px;top:356px">3</div><div class="r" style="left:229px;top:356px">3</div><div class="r" style="left:265px;top:356px">3</div><div class="r" style="left:301px;top:356px">3</div><div class="r" style="left:337px;top:356px">3</div><div class="r" style="left:373px;top:356px">3</div><div class="r" style="left:409px;top:356px">3</div>
<div class="r" style="left:13px;top:365px">3</div><div class="r" style="left:49px;top:365px">3</div><div class="r" style="left:85px;top:365px">3</div><div class="r" style="left:121px;top:365px">3</div><div class="r" style="left:157px;top:365px">3</div><div class="r" style="left:193px;top:365px">3</div><div class="r" style="left:229px;top:365px">3</div><div class="r" style="left:265px;top:365px">3</div><div class="r" style="left:301px;top:365px">3</div><div class="r" style="left:337px;top:365px">3</div><div class="r" style="left:373px;top:365px">3</div><div class="r" style="left:409px;top:365px">3</div>
<div class="r" style="left:13px;top:374px">3</div><div class="r" style="left:49px;top:374px">3</div><div class="r" style="left:85px;top:374px">3</div><div class="r" style="left:121px;top:374px">3</div><div class="r" style="left:157px;top:374px">3</div><div class="r" style="left:193px;top:374px">3</div><div class="r" style="left:229px;top:374px">3</div><div class="r" style="left:265px;top:374px">3</div><div class="r" style="left:301px;top:374px">3</div><div class="r" style="left:337px;top:374px">3</div><div class="r" style="left:373px;top:374px">3</div><div class="r" style="left:409px;top:374px">3</div>
<div class="r" style="left:13px;top:383px">3</div><div class="r" style="left:49px;top:383px">3</div><div class="r" style="left:85px;top:383px">3</div><div class="r" style="left:121px;top:383px">3</div><div class="r" style="left:157px;top:383px">3</div><div class="r" style="left:193px;top:383px">3</div><div class="r" style="left:229px;top:383px">3</div><div class="r" style="left:265px;top:383px">3</div><div class="r" style="left:301px;top:383px">3</div><div class="r" style="left:337px;top:383px">3</div><div class="r" style="left:373px;top:383px">3</div><div class="r" style="left:409px;top:383px">3</div>
<div class="r" style="left:13px;top:392px">3</div><div class="r" style="left:49px;top:392px">3</div><div class="r" style="left:85px;top:392px">3</div><div class="r" style="left:121px;top:392px">3</div><div class="r" style="left:157px;top:392px">3</div><div class="r" style="left:193px;top:392px">3</div><div class="r" style="left:229px;top:392px">3</div><div class="r" style="left:265px;top:392px">3</div><div class="r" style="left:301px;top:392px">3</div><div class="r" style="left:337px;top:392px">3</div><div class="r" style="left:373px;top:392px">3</div><div class="r" style="left:409px;top:392px">3</div>
<div class="r" style="left:13px;top:401px">3</div><div class="r" style="left:49px;top:401px">3</div><div class="r" style="left:85px;top:401px">3</div><div class="r" style="left:121px;top:401px">3</div><div class="r" style="left:157px;top:401px">3</div><div class="r" style="left:193px;top:401px">3</div><div class="r" style="left:229px;top:401px">3</div><div class="r" style="left:265px;top:401px">3</div><div class="r" style="left:301px;top:401px">3</div><div class="r" style="left:337px;top:401px">3</div><div class="r" style="left:373px;top:401px">3</div><div class="r" style="left:409px;top:401px">3</div>
<div class="r" style="left:13px;top:410px">3</div><div class="r" style="left:49px;top:410px">3</div><div class="r" style="left:85px;top:410px">3</div><div class="r" style="left:121px;top:410px">3</div><div class="r" style="left:157px;top:410px">3</div><div class="r" style="left:193px;top:410px">3</div><div class="r" style="left:229px;top:410px">3</div><div class="r" style="left:265px;top:410px">3</div><div class="r" style="left:301px;top:410px">3</div><div class="r" style="left:337px;top:410px">3</div><div class="r" style="left:373px;top:410px">3</div><div class="r" style="left:409px;top:410px">3</div>
<div class="r" style="left:13px;top:419px">3</div><div class="r" style="left:49px;top:419px">3</div><div class="r" style="left:85px;top:419px">3</div><div class="r" style="left:121px;top:419px">3</div><div class="r" style="left:157px;top:419px">3</div><div class="r" style="left:193px;top:419px">3</div><div class="r" style="left:229px;top:419px">3</div><div class="r" style="left:265px;top:419px">3</div><div class="r" style="left:301px;top:419px">3</div><div class="r" style="left:337px;top:419px">3</div><div class="r" style="left:373px;top:419px">3</div><div class="r" style="left:409px;top:419px">3</div>
<div class="r" style="left:13px;top:428px">3</div><div class="r" style="left:49px;top:428px">3</div><div class="r" style="left:85px;top:428px">3</div><div class="r" style="left:121px;top:428px">3</div><div class="r" style="left:157px;top:428px">3</div><div class="r" style="left:193px;top:428px">3</div><div class="r" style="left:229px;top:428px">3</div><div class="r" style="left:265px;top:428px">3</div><div class="r" style="left:301px;top:428px">3</div><div class="r" style="left:337px;top:428px">3</div><div class="r" style="left:373px;top:428px">3</div><div class="r" style="left:409px;top:428px">3</div>
<div class="r" style="left:13px;top:437px">3</div><div class="r" style="left:49px;top:437px">3</div><div class="r" style="left:85px;top:437px">3</div><div class="r" style="left:121px;top:437px">3</div><div class="r" style="left:157px;top:437px">3</div><div class="r" style="left:193px;top:437px">3</div><div class="r" style="left:229px;top:437px">3</div><div class="r" style="left:265px;top:437px">3</div><div class="r" style="left:301px;top:437px">3</div><div class="r" style="left:337px;top:437px">3</div><div class="r" style="left:373px;top:437px">3</div><div class="r" style="left:409px;top:437px">3</div>
<div class="r" style="left:13px;top:446px">3</div><div class="r" style="left:49px;top:446px">3</div><div class="r" style="left:85px;top:446px">3</div><div class="r" style="left:121px;top:446px">3</div><div class="r" style="left:157px;top:446px">3</div><div class="r" style="left:193px;top:446px">3</div><div class="r" style="left:229px;top:446px">3</div><div class="r" style="left:265px;top:446px">3</div><div class="r" style="left:301px;top:446px">3</div><div class="r" style="left:337px;top:446px">3</div><div class="r" style="left:373px;top:446px">3</div><div class="r" style="left:409px;top:446px">3</div>
<div class="r" style="left:13px;top:455px">3</div><div class="r" style="left:49px;top:455px">3</div><div class="r" style="left:85px;top:455px">3</div><div class="r" style="left:121px;top:455px">3</div><div class="r" style="left:157px;top:455px">3</div><div class="r" style="left:193px;top:455px">3</div><div class="r" style="left:229px;top:455px">3</div><div class="r" style="left:265px;top:455px">3</div><div class="r" style="left:301px;top:455px">3</div><div class="r" style="left:337px;top:455px">3</div><div class="r" style="left:373px;top:455px">3</div><div class="r" style="left:409px;top:455px">3</div>
<div class="r" style="left:13px;top:464px">3</div><div class="r" style="left:49px;top:464px">3</div><div class="r" style="left:85px;top:464px">3</div><div class="r" style="left:121px;top:464px">3</div><div class="r" style="left:157px;top:464px">3</div><div class="r" style="left:193px;top:464px">3</div><div class="r" style="left:229px;top:464px">3</div><div class="r" style="left:265px;top:464px">3</div><div class="r" style="left:301px;top:464px">3</div><div class="r" style="left:337px;top:464px">3</div><div class="r" style="left:373px;top:464px">3</div><div class="r" style="left:409px;top:464px">3</div>
<div class="r" style="left:13px;top:473px">3</div><div class="r" style="left:49px;top:473px">3</div><div class="r" style="left:85px;top:473px">3</div><div class="r" style="left:121px;top:473px">3</div><div class="r" style="left:157px;top:473px">3</div><div class="r" style="left:193px;top:473px">3</div><div class="r" style="left:229px;top:473px">3</div><div class="r" style="left:265px;top:473px">3</div><div class="r" style="left:301px;top:473px">3</div><div class="r" style="left:337px;top:473px">3</div><div class="r" style="left:373px;top:473px">3</div><div class="r" style="left:409px;top:473px">3</div>
<div class="r" style="left:13px;top:482px">3</div><div class="r" style="left:49px;top:482px">3</div><div class="r" style="left:85px;top:482px">3</div><div class="r" style="left:121px;top:482px">3</div><div class="r" style="left:157px;top:482px">3</div><div class="r" style="left:193px;top:482px">3</div><div class="r" style="left:229px;top:482px">3</div><div class="r" style="left:265px;top:482px">3</div><div class="r" style="left:301px;top:482px">3</div><div class="r" style="left:337px;top:482px">3</div><div class="r" style="left:373px;top:482px">3</div><div class="r" style="left:409px;top:482px">3</div>
<div class="r" style="left:13px;top:491px">3</div><div class="r" style="left:49px;top:491px">3</div><div class="r" style="left:85px;top:491px">3</div><div class="r" style="left:121px;top:491px">3</div><div class="r" style="left:157px;top:491px">3</div><div class="r" style="left:193px;top:491px">3</div><div class="r" style="left:229px;top:491px">3</div><div class="r" style="left:265px;top:491px">3</div><div class="r" style="left:301px;top:491px">3</div><div class="r" style="left:337px;top:491px">3</div><div class="r" style="left:373px;top:491px">3</div><div class="r" style="left:409px;top:491px">3</div>
<div class="r" style="left:13px;top:500px">4</div><div class="r" style="left:49px;top:500px">4</div><div class="r" style="left:85px;top:500px">4</div><div class="r" style="left:121px;top:500px">4</div><div class="r" style="left:157px;top:500px">4</div><div class="r" style="left:193px;top:500px">4</div><div class="r" style="left:229px;top:500px">4</div><div class="r" style="left:265px;top:500px">4</div><div class="r" style="left:301px;top:500px">4</div><div class="r" style="left:337px;top:500px">4</div><div class="r" style="left:373px;top:500px">4</div><div class="r" style="left:409px;top:500px">4</div>
<div class="r" style="left:13px;top:509px">4</div><div class="r" style="left:49px;top:509px">4</div><div class="r" style="left:85px;top:509px">4</div><div class="r" style="left:121px;top:509px">4</div><div class="r" style="left:157px;top:509px">4</div><div class="r" style="left:193px;top:509px">4</div><div class="r" style="left:229px;top:509px">4</div><div class="r" style="left:265px;top:509px">4</div><div class="r" style="left:301px;top:509px">4</div><div class="r" style="left:337px;top:509px">4</div><div class="r" style="left:373px;top:509px">4</div><div class="r" style="left:409px;top:509px">4</div>
<div class="r" style="left:13px;top:518px">4</div><div class="r" style="left:49px;top:518px">4</div><div class="r" style="left:85px;top:518px">4</div><div class="r" style="left:121px;top:518px">4</div><div class="r" style="left:157px;top:518px">4</div><div class="r" style="left:193px;top:518px">4</div><div class="r" style="left:229px;top:518px">4</div><div class="r" style="left:265px;top:518px">4</div><div class="r" style="left:301px;top:518px">4</div><div class="r" style="left:337px;top:518px">4</div><div class="r" style="left:373px;top:518px">4</div><div class="r" style="left:409px;top:518px">4</div>
<div class="r" style="left:13px;top:527px">4</div><div class="r" style="left:49px;top:527px">4</div><div class="r" style="left:85px;top:527px">4</div><div class="r" style="left:121px;top:527px">4</div><div class="r" style="left:157px;top:527px">4</div><div class="r" style="left:193px;top:527px">4</div><div class="r" style="left:229px;top:527px">4</div><div class="r" style="left:265px;top:527px">4</div><div class="r" style="left:301px;top:527px">4</div><div class="r" style="left:337px;top:527px">4</div><div class="r" style="left:373px;top:527px">4</div><div class="r" style="left:409px;top:527px">4</div>
<div class="r" style="left:13px;top:536px">4</div><div class="r" style="left:49px;top:536px">4</div><div class="r" style="left:85px;top:536px">4</div><div class="r" style="left:121px;top:536px">4</div><div class="r" style="left:157px;top:536px">4</div><div class="r" style="left:193px;top:536px">4</div><div class="r" style="left:229px;top:536px">4</div><div class="r" style="left:265px;top:536px">4</div><div class="r" style="left:301px;top:536px">4</div><div class="r" style="left:337px;top:536px">4</div><div class="r" style="left:373px;top:536px">4</div><div class="r" style="left:409px;top:536px">4</div>
<div class="r" style="left:13px;top:545px">4</div><div class="r" style="left:49px;top:545px">4</div><div class="r" style="left:85px;top:545px">4</div><div class="r" style="left:121px;top:545px">4</div><div class="r" style="left:157px;top:545px">4</div><div class="r" style="left:193px;top:545px">4</div><div class="r" style="left:229px;top:545px">4</div><div class="r" style="left:265px;top:545px">4</div><div class="r" style="left:301px;top:545px">4</div><div class="r" style="left:337px;top:545px">4</div><div class="r" style="left:373px;top:545px">4</div><div class="r" style="left:409px;top:545px">4</div>
<div class="r" style="left:13px;top:554px">4</div><div class="r" style="left:49px;top:554px">4</div><div class="r" style="left:85px;top:554px">4</div><div class="r" style="left:121px;top:554px">4</div><div class="r" style="left:157px;top:554px">4</div><div class="r" style="left:193px;top:554px">4</div><div class="r" style="left:229px;top:554px">4</div><div class="r" style="left:265px;top:554px">4</div><div class="r" style="left:301px;top:554px">4</div><div class="r" style="left:337px;top:554px">4</div><div class="r" style="left:373px;top:554px">4</div><div class="r" style="left:409px;top:554px">4</div>
<div class="r" style="left:13px;top:563px">4</div><div class="r" style="left:49px;top:563px">4</div><div class="r" style="left:85px;top:563px">4</div><div class="r" style="left:121px;top:563px">4</div><div class="r" style="left:157px;top:563px">4</div><div class="r" style="left:193px;top:563px">4</div><div class="r" style="left:229px;top:563px">4</div><div class="r" style="left:265px;top:563px">4</div><div class="r" style="left:301px;top:563px">4</div><div class="r" style="left:337px;top:563px">4</div><div class="r" style="left:373px;top:563px">4</div><div class="r" style="left:409px;top:563px">4</div>
<div class="r" style="left:13px;top:572px">4</div><div class="r" style="left:49px;top:572px">4</div><div class="r" style="left:85px;top:572px">4</div><div class="r" style="left:121px;top:572px">4</div><div class="r" style="left:157px;top:572px">4</div><div class="r" style="left:193px;top:572px">4</div><div class="r" style="left:229px;top:572px">4</div><div class="r" style="left:265px;top:572px">4</div><div class="r" style="left:301px;top:572px">4</div><div class="r" style="left:337px;top:572px">4</div><div class="r" style="left:373px;top:572px">4</div><div class="r" style="left:409px;top:572px">4</div>
<div class="r" style="left:13px;top:581px">4</div><div class="r" style="left:49px;top:581px">4</div><div class="r" style="left:85px;top:581px">4</div><div class="r" style="left:121px;top:581px">4</div><div class="r" style="left:157px;top:581px">4</div><div class="r" style="left:193px;top:581px">4</div><div class="r" style="left:229px;top:581px">4</div><div class="r" style="left:265px;top:581px">4</div><div class="r" style="left:301px;top:581px">4</div><div class="r" style="left:337px;top:581px">4</div><div class="r" style="left:373px;top:581px">4</div><div class="r" style="left:409px;top:581px">4</div>
<div class="r" style="left:13px;top:590px">4</div><div class="r" style="left:49px;top:590px">4</div><div class="r" style="left:85px;top:590px">4</div><div class="r" style="left:121px;top:590px">4</div><div class="r" style="left:157px;top:590px">4</div><div class="r" style="left:193px;top:590px">4</div><div class="r" style="left:229px;top:590px">4</div><div class="r" style="left:265px;top:590px">4</div><div class="r" style="left:301px;top:590px">4</div><div class="r" style="left:337px;top:590px">4</div><div class="r" style="left:373px;top:590px">4</div><div class="r" style="left:409px;top:590px">4</div>
<div class="r" style="left:13px;top:599px">4</div><div class="r" style="left:49px;top:599px">4</div><div class="r" style="left:85px;top:599px">4</div><div class="r" style="left:121px;top:599px">4</div><div class="r" style="left:157px;top:599px">4</div><div class="r" style="left:193px;top:599px">4</div><div class="r" style="left:229px;top:599px">4</div><div class="r" style="left:265px;top:599px">4</div><div class="r" style="left:301px;top:599px">4</div><div class="r" style="left:337px;top:599px">4</div><div class="r" style="left:373px;top:599px">4</div><div class="r" style="left:409px;top:599px">4</div>
<div class="r" style="left:13px;top:608px">4</div><div class="r" style="left:49px;top:608px">4</div><div class="r" style="left:85px;top:608px">4</div><div class="r" style="left:121px;top:608px">4</div><div class="r" style="left:157px;top:608px">4</div><div class="r" style="left:193px;top:608px">4</div><div class="r" style="left:229px;top:608px">4</div><div class="r" style="left:265px;top:608px">4</div><div class="r" style="left:301px;top:608px">4</div><div class="r" style="left:337px;top:608px">4</div><div class="r" style="left:373px;top:608px">4</div><div class="r" style="left:409px;top:608px">4</div>
<div class="r" style="left:13px;top:617px">4</div><div class="r" style="left:49px;top:617px">4</div><div class="r" style="left:85px;top:617px">4</div><div class="r" style="left:121px;top:617px">4</div><div class="r" style="left:157px;top:617px">4</div><div class="r" style="left:193px;top:617px">4</div><div class="r" style="left:229px;top:617px">4</div><div class="r" style="left:265px;top:617px">4</div><div class="r" style="left:301px;top:617px">4</div><div class="r" style="left:337px;top:617px">4</div><div class="r" style="left:373px;top:617px">4</div><div class="r" style="left:409px;top:617px">4</div>
<div class="r" style="left:13px;top:626px">4</div><div class="r" style="left:49px;top:626px">4</div><div class="r" style="left:85px;top:626px">4</div><div class="r" style="left:121px;top:626px">4</div><div class="r" style="left:157px;top:626px">4</div><div class="r" style="left:193px;top:626px">4</div><div class="r" style="left:229px;top:626px">4</div><div class="r" style="left:265px;top:626px">4</div><div class="r" style="left:301px;top:626px">4</div><div class="r" style="left:337px;top:626px">4</div><div class="r" style="left:373px;top:626px">4</div><div class="r" style="left:409px;top:626px">4</div>
<div class="r" style="left:13px;top:635px">4</div><div class="r" style="left:49px;top:635px">4</div><div class="r" style="left:85px;top:635px">4</div><div class="r" style="left:121px;top:635px">4</div><div class="r" style="left:157px;top:635px">4</div><div class="r" style="left:193px;top:635px">4</div><div class="r" style="left:229px;top:635px">4</div><div class="r" style="left:265px;top:635px">4</div><div class="r" style="left:301px;top:635px">4</div><div class="r" style="left:337px;top:635px">4</div><div class="r" style="left:373px;top:635px">4</div><div class="r" style="left:409px;top:635px">4</div>
<div class="r" style="left:13px;top:644px">4</div><div class="r" style="left:49px;top:644px">4</div><div class="r" style="left:85px;top:644px">4</div><div class="r" style="left:121px;top:644px">4</div><div class="r" style="left:157px;top:644px">4</div><div class="r" style="left:193px;top:644px">4</div><div class="r" style="left:229px;top:644px">4</div><div class="r" style="left:265px;top:644px">4</div><div class="r" style="left:301px;top:644px">4</div><div class="r" style="left:337px;top:644px">4</div><div class="r" style="left:373px;top:644px">4</div><div class="r" style="left:409px;top:644px">4</div>
<div class="r" style="left:13px;top:653px">4</div><div class="r" style="left:49px;top:653px">4</div><div class="r" style="left:85px;top:653px">4</div><div class="r" style="left:121px;top:653px">4</div><div class="r" style="left:157px;top:653px">4</div><div class="r" style="left:193px;top:653px">4</div><div class="r" style="left:229px;top:653px">4</div><div class="r" style="left:265px;top:653px">4</div><div class="r" style="left:301px;top:653px">4</div><div class="r" style="left:337px;top:653px">4</div><div class="r" style="left:373px;top:653px">4</div><div class="r" style="left:409px;top:653px">4</div>
<div class="r" style="left:13px;top:662px">4</div><div class="r" style="left:49px;top:662px">4</div><div class="r" style="left:85px;top:662px">4</div><div class="r" style="left:121px;top:662px">4</div><div class="r" style="left:157px;top:662px">4</div><div class="r" style="left:193px;top:662px">4</div><div class="r" style="left:229px;top:662px">4</div><div class="r" style="left:265px;top:662px">4</div><div class="r" style="left:301px;top:662px">4</div><div class="r" style="left:337px;top:662px">4</div><div class="r" style="left:373px;top:662px">4</div><div class="r" style="left:409px;top:662px">4</div>
<svg class="a" style="left:265px;top:195px" width="5" height="6"><path d="M1 1l2.2 2l-2.2 2" fill="none" stroke="#444" stroke-width="1"/></svg>
<svg class="a" style="left:445px;top:366px" width="5" height="6"><path d="M1 1l2.2 2l-2.2 2" fill="none" stroke="#444" stroke-width="1"/></svg>
<div class="a" style="left:13px;top:158px;width:469px;height:1px;background:#5a00d6"></div>
<div class="a" style="left:13px;top:158px;width:1px;height:514px;background:#5a00d6"></div>
<div class="a" style="left:479px;top:158px;width:3px;height:514px;background:#5a00d6"></div>
<div class="a" style="left:13px;top:669px;width:469px;height:3px;background:#5a00d6"></div>
<div class="a" style="left:479px;top:345px;width:39px;height:12px;border:2px solid #107c41"></div>
<div class="a" style="left:481px;top:347px;width:35px;height:8px;border:1px solid #fff"></div>
<div class="a" style="left:493px;top:347px;width:185px;height:391px;background:#d7d7d7;border-radius:6px;box-shadow:0 3px 10px rgba(0,0,0,0.25), 0 0 0 0.5px rgba(0,0,0,0.15)"></div>
<div class="a" style="left:493px;top:347px;width:185px;height:391px">
<div class="mi" style="top:4px;color:#262626">剪切</div>
<div class="ms" style="top:4px;color:#262626">⌘X</div>
<div class="mi" style="top:23px;color:#262626">复制</div>
<div class="ms" style="top:23px;color:#262626">⌘C</div>
<div class="mi" style="top:42px;color:#262626">粘贴</div>
<div class="ms" style="top:42px;color:#262626">⌘V</div>
<div class="mi" style="top:61px;color:#262626">选择性粘贴...</div>
<div class="ms" style="top:61px;color:#262626">^&#8201;⌘V</div>
<div class="mline" style="top:85px"></div>
<div class="mi" style="top:92px;color:#262626">智能查找...</div>
<div class="ms" style="top:92px;color:#262626">^&#8201;⌘L</div>
<div class="mi" style="top:111px;color:#a3a3a3">同义词库...</div>
<div class="ms" style="top:111px;color:#a3a3a3">^&#8201;⌥&#8202;⌘R</div>
<div class="mline" style="top:135px"></div>
<div class="mi" style="top:142px;color:#262626">插入...</div>
<div class="mi" style="top:161px;color:#262626">删除...</div>
<div class="mi" style="top:180px;color:#262626">清除内容</div>
<div class="mline" style="top:204px"></div>
<div class="mi" style="top:211px;color:#262626">插入批注</div>
<div class="mline" style="top:235px"></div>
<div class="mi" style="top:242px;color:#262626">设置单元格格式...</div>
<div class="ms" style="top:242px;color:#262626">⌘1</div>
<div class="mline" style="top:266px"></div>
<div class="a" style="left:0;top:273px;width:185px;height:19px;background:#f28a2e"></div>
<div class="mi" style="top:273px;color:#fff">分页</div>
<div class="mi" style="top:292px;color:#a3a3a3">重设所有分页符</div>
<div class="mi" style="top:311px;color:#262626">设置打印区域</div>
<div class="mi" style="top:330px;color:#262626">重设打印区域</div>
<div class="mi" style="top:349px;color:#262626">页面设置...</div>
<div class="mi" style="top:368px;color:#262626">服务</div>
<svg class="a" style="left:164px;top:371.5px" width="10" height="11"><path d="M0.5 0.5L8.5 5.5L0.5 10.5z" fill="#262626"/></svg>
</div>
</body></html>
